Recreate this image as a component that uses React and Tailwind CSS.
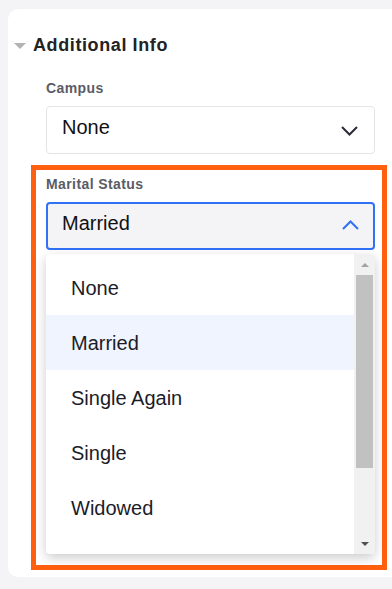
import React from 'react';

const options = ['None', 'Married', 'Single Again', 'Single', 'Widowed'];

const ChevronDown = ({ className }) => (
  <svg className={className} width="17" height="10" viewBox="0 0 17 10" fill="none">
    <path d="M1 1l7.5 7.5L16 1" stroke="currentColor" strokeWidth="2" />
  </svg>
);

const ChevronUp = ({ className }) => (
  <svg className={className} width="17" height="10" viewBox="0 0 17 10" fill="none">
    <path d="M1 9l7.5-7.5L16 9" stroke="currentColor" strokeWidth="2" />
  </svg>
);

const App = () => {
  const selected = 'Married';

  return (
    <div className="w-[392px] h-[589px] overflow-hidden bg-[#f4f4f6] pl-2 pt-[9px] font-['Liberation_Sans',Arial,sans-serif]">
      <div className="h-[568px] bg-white rounded-l-[10px] pt-6">
        {/* section header */}
        <div className="flex items-center pl-[6px] h-6">
          <div className="w-0 h-0 border-l-[6px] border-r-[6px] border-t-[6px] border-l-transparent border-r-transparent border-t-[#b3b3b3] mt-[1px]" />
          <h2 className="ml-[7px] text-[18px] leading-6 font-bold tracking-[0.6px] text-[#232323]">Additional Info</h2>
        </div>

        {/* campus */}
        <div className="pl-[38px] mt-[22px]">
          <label className="block text-[14px] leading-[18px] font-bold tracking-[0.4px] text-[#5b5b66]">Campus</label>
          <div className="mt-[9px] w-[329px] h-12 flex items-center justify-between pl-[15px] pr-4 border border-[#e3e5e9] rounded-[4px] bg-white">
            <span className="text-[20px] text-[#111] mb-[6px]">None</span>
            <ChevronDown className="text-[#2b2b3a] mt-[2px]" />
          </div>
        </div>

        {/* marital status (highlighted) */}
        <div className="ml-[23px] mt-[11px] w-[356px] border-[5px] border-[#ff600f] pt-[5px] pl-[10px] pb-[11px]">
          <label className="block text-[14px] leading-[18px] font-bold tracking-[0.4px] text-[#5b5b66]">Marital Status</label>
          <div className="mt-[9px] w-[329px] h-12 flex items-center justify-between pl-[14px] pr-[14px] border-2 border-[#3171f6] rounded-[4px] bg-[#f4f4f7]">
            <span className="text-[20px] text-[#111] mb-[6px]">{selected}</span>
            <ChevronUp className="text-[#3171f6] mt-[-2px]" />
          </div>

          <div className="mt-1 w-[329px] h-[300px] flex bg-white rounded-[4px] shadow-[0_4px_12px_rgba(0,0,0,0.2)] overflow-hidden">
            <ul className="flex-1 pt-[6px]">
              {options.map((opt) => (
                <li
                  key={opt}
                  className={`h-[55px] flex items-center pl-[25px] text-[20px] text-[#1c1c28] ${opt === selected ? 'bg-[#eff4fe]' : ''}`}
                >
                  {opt}
                </li>
              ))}
            </ul>
            <div className="w-[21px] bg-[#f1f1f1] flex flex-col">
              <div className="h-[21px] flex items-center justify-center">
                <div className="w-0 h-0 border-l-4 border-r-4 border-b-4 border-l-transparent border-r-transparent border-b-[#a3a3a3]" />
              </div>
              <div className="mx-[2px] h-[193px] bg-[#c1c1c1]" />
              <div className="flex-1" />
              <div className="h-[21px] flex items-center justify-center">
                <div className="w-0 h-0 border-l-4 border-r-4 border-t-4 border-l-transparent border-r-transparent border-t-[#505050]" />
              </div>
            </div>
          </div>
        </div>
      </div>
    </div>
  );
};

export default App;
